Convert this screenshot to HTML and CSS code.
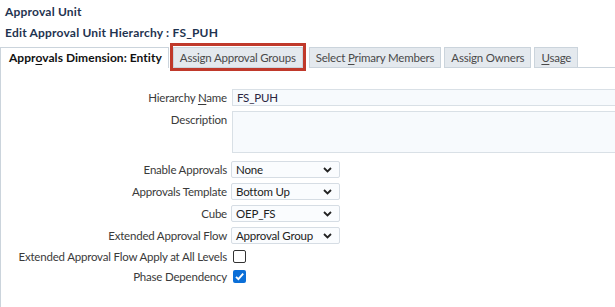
FILE: index.html
```html
<!DOCTYPE html>
<html>
<head>
<meta charset="utf-8">
<link rel="stylesheet" href="styles.css">
</head>
<body>
<div class="page">
  <h1 class="title">Approval Unit</h1>
  <h2 class="subtitle">Edit Approval Unit Hierarchy : FS_PUH</h2>
  <div class="tabs">
    <div class="tab tab-selected">Appr<u>o</u>vals Dimension: Entity</div>
    <div class="tab tab-highlight">Assign Approval Groups</div>
    <div class="tab">Select <u>P</u>rimary Members</div>
    <div class="tab">Assign Owners</div>
    <div class="tab"><u>U</u>sage</div>
    <div class="tab-fill"></div>
  </div>
  <div class="panel">
    <div class="form">
      <label class="label">Hierarchy <u>N</u>ame</label>
      <div class="field"><div class="input">FS_PUH</div></div>

      <label class="label label-top">Description</label>
      <div class="field"><div class="textarea"></div></div>

      <label class="label gap-top">Enable Approvals</label>
      <div class="field gap-top"><div class="select"><span>None</span><svg class="chev" width="9" height="6" viewBox="0 0 9 6"><path d="M1 1 L4.5 4.5 L8 1" fill="none" stroke="#222" stroke-width="1.8"/></svg></div></div>

      <label class="label">Approvals Template</label>
      <div class="field"><div class="select"><span>Bottom Up</span><svg class="chev" width="9" height="6" viewBox="0 0 9 6"><path d="M1 1 L4.5 4.5 L8 1" fill="none" stroke="#222" stroke-width="1.8"/></svg></div></div>

      <label class="label">Cube</label>
      <div class="field"><div class="select"><span>OEP_FS</span><svg class="chev" width="9" height="6" viewBox="0 0 9 6"><path d="M1 1 L4.5 4.5 L8 1" fill="none" stroke="#222" stroke-width="1.8"/></svg></div></div>

      <label class="label">Extended Approval Flow</label>
      <div class="field"><div class="select"><span>Approval Group</span><svg class="chev" width="9" height="6" viewBox="0 0 9 6"><path d="M1 1 L4.5 4.5 L8 1" fill="none" stroke="#222" stroke-width="1.8"/></svg></div></div>

      <label class="label label-cb">Extended Approval Flow Apply at All Levels</label>
      <div class="field field-cb"><span class="check"></span></div>

      <label class="label label-cb">Phase Dependency</label>
      <div class="field field-cb"><span class="check check-on"><svg width="13" height="13" viewBox="0 0 13 13"><path d="M3 6.8 L5.4 9.2 L10.2 3.6" fill="none" stroke="#fff" stroke-width="1.9"/></svg></span></div>
    </div>
  </div>
</div>
</body>
</html>
```
FILE: styles.css
```css
html, body {
  margin: 0;
  padding: 0;
  overflow: hidden;
  background: #fff;
}
body {
  font-family: "Lato", "Noto Sans", sans-serif;
  font-size: 11.5px;
  letter-spacing: -0.2px;
  color: #333;
}
.page {
  display: flex;
  flex-direction: column;
  height: 307px;
}
.title, .subtitle {
  margin: 0;
  font-size: 12px;
  letter-spacing: 0.2px;
  font-weight: bold;
  line-height: 16px;
  color: #1f3450;
  padding-left: 5px;
}
.title {
  padding-top: 4px;
}
.subtitle {
  margin-top: 5px;
}
.tabs {
  display: flex;
  align-items: flex-end;
  padding-top: 6px;
}
.tab {
  position: relative;
  height: 21px;
  box-sizing: border-box;
  line-height: 19px;
  padding: 0 6px;
  background: #e4e9ee;
  border: 1px solid #cbd4dc;
  color: #4a4a4a;
  margin-right: 3px;
  white-space: nowrap;
}
.tab u, .label u {
  text-decoration-thickness: 1px;
  text-underline-offset: 2px;
}
.tab-selected {
  background: #fff;
  border-bottom: none;
  color: #111;
  font-weight: bold;
  font-size: 12px;
  letter-spacing: 0.05px;
  padding: 0 6px 0 8px;
  margin-right: 4px;
}
.tab-highlight {
  margin-right: 6px;
}
.tab-highlight::after {
  content: "";
  position: absolute;
  left: -4px;
  top: -5px;
  right: -4px;
  bottom: -4px;
  border: 3px solid #c0392b;
}
.tab-fill {
  flex: 1;
  height: 21px;
  box-sizing: border-box;
  border-bottom: 1px solid #cbd4dc;
  margin-left: -3px;
}
.panel {
  flex: 1;
  border-left: 1px solid #cbd4dc;
  overflow: hidden;
}
.form {
  display: grid;
  grid-template-columns: 226px 1fr;
  column-gap: 5px;
  row-gap: 5px;
  padding-top: 21px;
}
.label {
  text-align: right;
  align-self: center;
  line-height: 17px;
  white-space: nowrap;
  color: #3a3a3a;
}
.label-top {
  align-self: start;
}
.label-cb {
  line-height: 15px;
}
.gap-top {
  margin-top: 3px;
}
.field {
  display: flex;
  align-items: center;
  min-height: 17px;
}
.field-cb {
  min-height: 15px;
}
.input {
  width: 420px;
  height: 17px;
  box-sizing: border-box;
  border: 1px solid #d9e0e6;
  background: #f7fafd;
  padding-left: 4px;
  line-height: 15px;
  color: #2a2540;
  flex: none;
}
.textarea {
  width: 420px;
  height: 42px;
  box-sizing: border-box;
  border: 1px solid #d9e0e6;
  background: #f7fafd;
  flex: none;
}
.select {
  position: relative;
  width: 109px;
  height: 17px;
  box-sizing: border-box;
  border: 1px solid #d6dde4;
  border-radius: 2px;
  background: #fafcfe;
  padding-left: 4px;
  line-height: 15px;
  color: #222;
  margin-left: -1px;
}
.chev {
  position: absolute;
  right: 7px;
  top: 5px;
}
.check {
  display: inline-block;
  width: 13px;
  height: 13px;
  box-sizing: border-box;
  border: 1.5px solid #333;
  border-radius: 2px;
  background: #fff;
  margin-left: 1px;
}
.check-on {
  border: none;
  background: #0b6fd8;
}
.check-on svg {
  display: block;
}
```
